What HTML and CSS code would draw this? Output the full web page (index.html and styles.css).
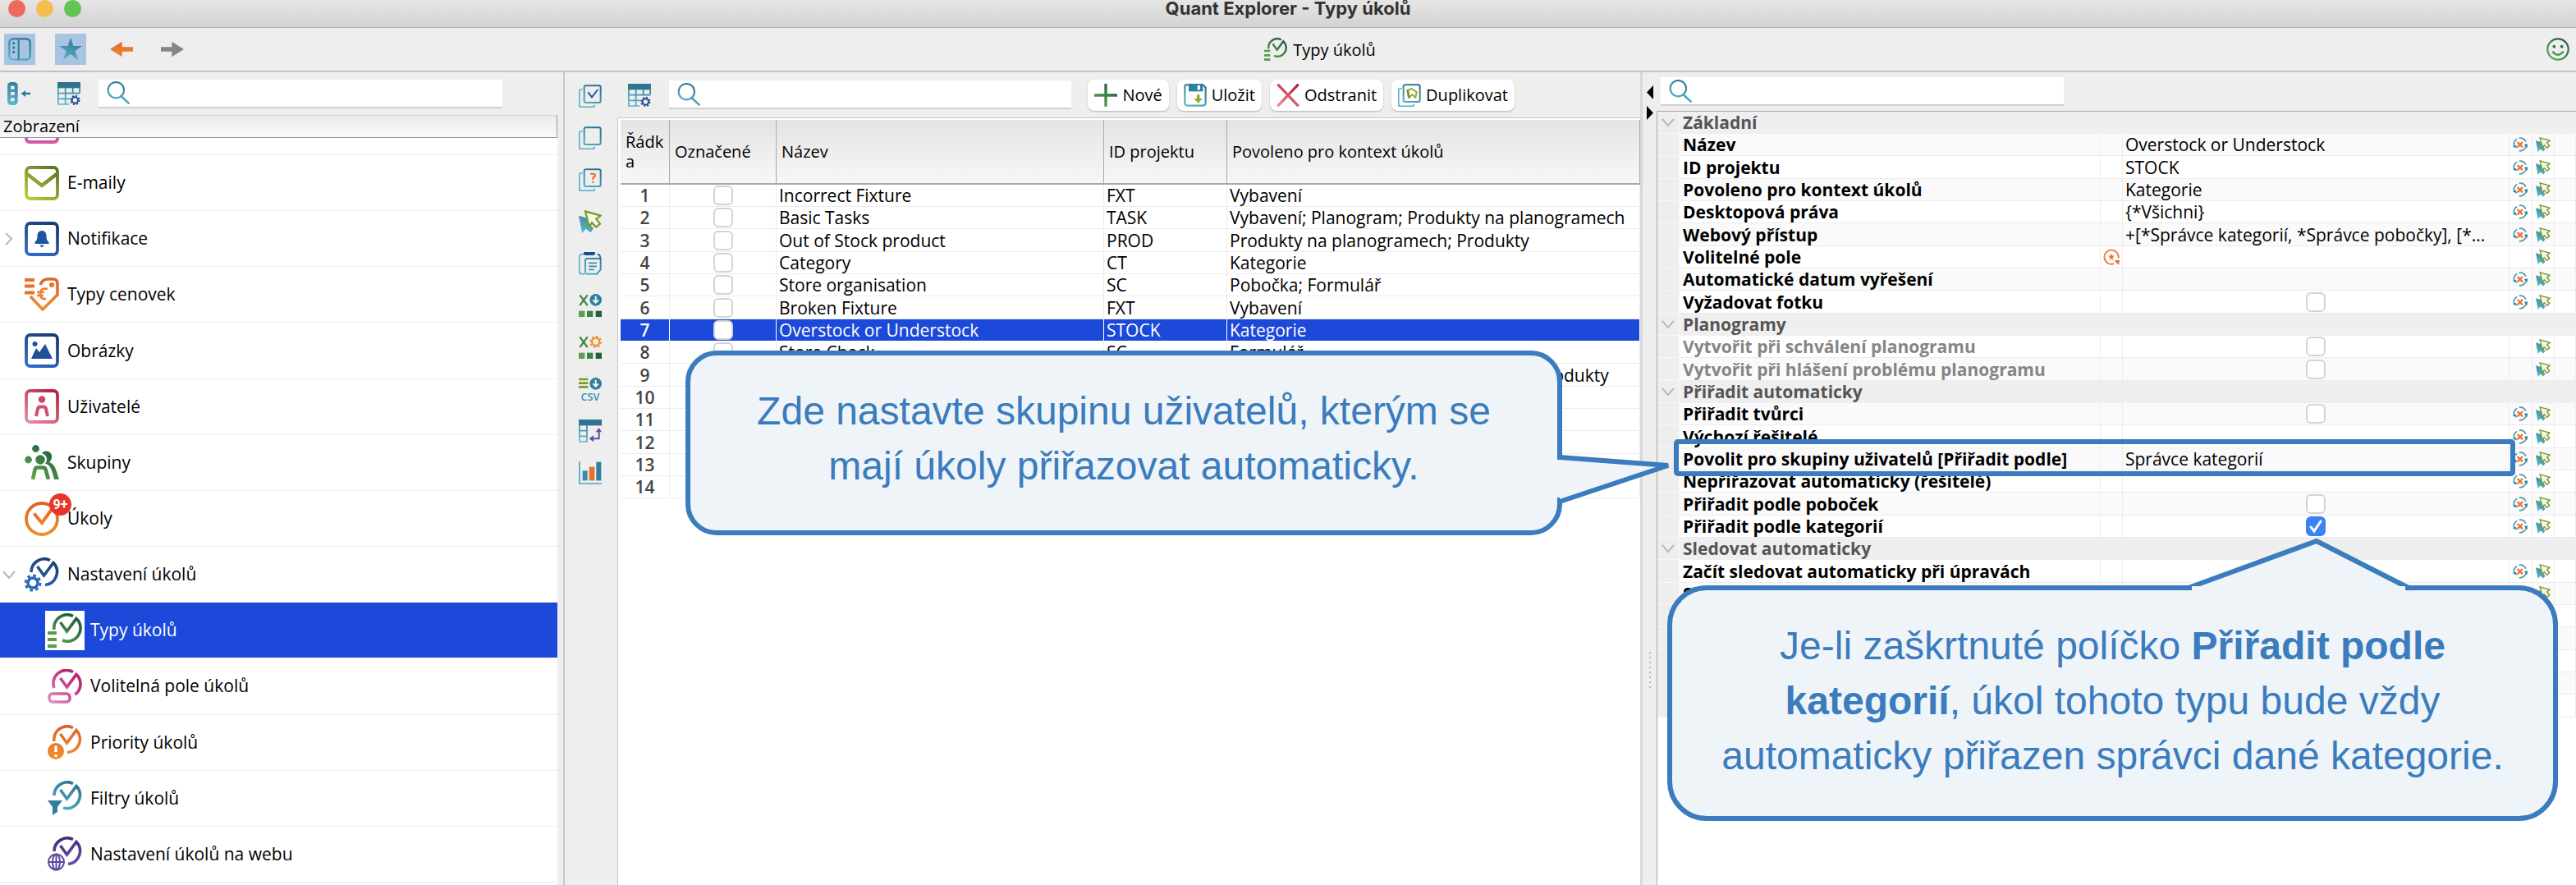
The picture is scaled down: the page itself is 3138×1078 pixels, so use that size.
FILE: index.html
```html
<!DOCTYPE html>
<html lang="cs">

<head>

  <meta charset="UTF-8">
  <meta name="viewport" content="width=device-width, initial-scale=1.0">
  <title>Quant Explorer - Typy úkolů</title>

  <link rel="stylesheet" href="styles.css">

</head>

<body>

  <!-- ! Icon sprite -->
  <svg class="sprite" aria-hidden="true">
    <defs>
      <linearGradient id="teal" gradientUnits="userSpaceOnUse" x1="30" y1="0" x2="8" y2="42">
        <stop offset="0" stop-color="#2b7392" /><stop offset="1" stop-color="#5cbacb" />
      </linearGradient>
      <linearGradient id="blue" gradientUnits="userSpaceOnUse" x1="30" y1="0" x2="10" y2="42">
        <stop offset="0" stop-color="#1c3c70" /><stop offset="1" stop-color="#2f6cc8" />
      </linearGradient>
      <linearGradient id="green" gradientUnits="userSpaceOnUse" x1="34" y1="4" x2="6" y2="40">
        <stop offset="0" stop-color="#1d5c40" /><stop offset="1" stop-color="#62aa4c" />
      </linearGradient>
      <linearGradient id="orange" gradientUnits="userSpaceOnUse" x1="21" y1="0" x2="21" y2="42">
        <stop offset="0" stop-color="#e0602c" /><stop offset="1" stop-color="#f0902e" />
      </linearGradient>
      <linearGradient id="magenta" gradientUnits="userSpaceOnUse" x1="30" y1="10" x2="4" y2="40">
        <stop offset="0" stop-color="#bd2473" /><stop offset="1" stop-color="#e08cc4" />
      </linearGradient>
      <linearGradient id="red" gradientUnits="userSpaceOnUse" x1="36" y1="0" x2="6" y2="42">
        <stop offset="0" stop-color="#b41f38" /><stop offset="1" stop-color="#ea8ba4" />
      </linearGradient>
      <linearGradient id="olive" gradientUnits="userSpaceOnUse" x1="36" y1="0" x2="6" y2="42">
        <stop offset="0" stop-color="#557326" /><stop offset="1" stop-color="#c2cb38" />
      </linearGradient>
      <linearGradient id="purple" gradientUnits="userSpaceOnUse" x1="21" y1="0" x2="21" y2="42">
        <stop offset="0" stop-color="#432a78" /><stop offset="1" stop-color="#6f5db0" />
      </linearGradient>

      <symbol id="i-sidebar" viewBox="0 0 42 42">
        <rect x="2" y="2" width="38" height="38" rx="7" fill="none" stroke="url(#teal)" stroke-width="3.5" />
        <path d="M19 2v38" stroke="#2f7c98" stroke-width="3" />
        <path d="M10 10v0M10 18v0M10 26v0" stroke="#2f7c98" stroke-width="5" stroke-linecap="round" />
      </symbol>
      <symbol id="i-star" viewBox="0 0 42 42">
        <path d="M21 0l5 15h16L29 24l6 17-14-11L7 41l6-17L0 15h16z" fill="url(#teal)" />
      </symbol>
      <symbol id="i-left" viewBox="0 0 42 42">
        <path d="M0 21L22 7v10h20v8H22v10z" fill="url(#orange)" />
      </symbol>
      <symbol id="i-right" viewBox="0 0 42 42">
        <path d="M42 21L20 7v10H0v8h20v10z" fill="#858585" />
      </symbol>
      <symbol id="i-task-types" viewBox="0 0 42 42">
        <path d="M8 20A16 16 0 0 1 31 3.500M15.500 11l8 11L35 6.500A16 16 0 0 1 18 33" fill="none" stroke="url(#green)" stroke-width="3.600" />
        <path d="M0 24h11M0 32h11M0 40h11" stroke="#5a9c4a" stroke-width="4" />
      </symbol>
      <symbol id="i-task-fields" viewBox="0 0 42 42">
        <path d="M8 23A16 16 0 0 1 31 3.500M15.500 11l8 11L35 6.500A16 16 0 0 1 33.500 31" fill="none" stroke="url(#magenta)" stroke-width="3.600" />
        <rect x="2" y="30" width="25" height="10" rx="4" fill="none" stroke="url(#magenta)" stroke-width="3.600" />
      </symbol>
      <symbol id="i-task-priority" viewBox="0 0 42 42">
        <path d="M8 20A16 16 0 0 1 31 3.500M15.500 11l8 11L35 6.500A16 16 0 0 1 24 33.500" fill="none" stroke="url(#orange)" stroke-width="3.600" />
        <circle cx="10" cy="32" r="10" fill="url(#orange)" />
        <path d="M10 25.500v7.500M10 36v3" stroke="#fff" stroke-width="3.400" />
      </symbol>
      <symbol id="i-task-filter" viewBox="0 0 42 42">
        <path d="M8 18A16 16 0 0 1 31 3.500M15.500 11l8 11L35 6.500A16 16 0 0 1 19 33" fill="none" stroke="url(#teal)" stroke-width="3.600" />
        <path d="M0 24h18l-6 8v6l-6 4v-10z" fill="#2f7f9e" />
      </symbol>
      <symbol id="i-task-web" viewBox="0 0 42 42">
        <path d="M8 18A16 16 0 0 1 31 3.500M15.500 11l8 11L35 6.500A16 16 0 0 1 25 33.500" fill="none" stroke="url(#purple)" stroke-width="3.600" />
        <g fill="none" stroke="#5d4a9c" stroke-width="2">
          <circle cx="10.500" cy="31" r="9.500" /><ellipse cx="10.500" cy="31" rx="4.500" ry="9.500" /><path d="M10.500 21v20M1 31h19" />
        </g>
      </symbol>
      <symbol id="i-task-settings" viewBox="0 0 42 42">
        <path d="M8 18A16 16 0 0 1 31 3.500M15.500 11l8 11L35 6.500A16 16 0 0 1 25 33.500" fill="none" stroke="url(#blue)" stroke-width="3.600" />
        <circle cx="10" cy="31" r="6" fill="none" stroke="#2d66bc" stroke-width="3.500" />
        <circle cx="10" cy="31" r="9" fill="none" stroke="#2d66bc" stroke-width="3" stroke-dasharray="3.600 3.460" />
      </symbol>
      <symbol id="i-tasks" viewBox="0 0 42 42">
        <circle cx="21" cy="21" r="19" fill="none" stroke="url(#orange)" stroke-width="3.800" />
        <path d="M11.500 14.500L21 26l13-18" fill="none" stroke="url(#orange)" stroke-width="4" />
      </symbol>
      <symbol id="i-mail" viewBox="0 0 42 42">
        <rect x="2" y="2" width="38" height="38" rx="5" fill="none" stroke="url(#olive)" stroke-width="3.800" />
        <path d="M3 10l18 14 18-14" fill="none" stroke="url(#olive)" stroke-width="4.500" />
      </symbol>
      <symbol id="i-notify" viewBox="0 0 42 42">
        <rect x="2" y="2" width="38" height="38" rx="5" fill="none" stroke="url(#blue)" stroke-width="3.800" />
        <path d="M21 11c-4 0-5.500 3-5.500 6.500 0 4-1 5.500-3 7.500v2h17v-2c-2-2-3-3.500-3-7.500 0-3.500-1.500-6.500-5.500-6.500zM18 28.500h6l-3 3z" fill="#2253a0" />
      </symbol>
      <symbol id="i-price" viewBox="0 0 42 42">
        <path d="M0 3h12M0 10.500h12M0 18.500h12" stroke="#e8702c" stroke-width="4" />
        <path d="M19 9q3-7 9-7h7q5 0 5 6v13L22 39 7 23" fill="none" stroke="url(#orange)" stroke-width="3.600" />
        <circle cx="33" cy="9" r="3" fill="#e8702c" />
        <path d="M28 14q-9-2-9 6 0 7 7 6M15 18h9M15 22h8" fill="none" stroke="#ee8030" stroke-width="2.600" />
      </symbol>
      <symbol id="i-image" viewBox="0 0 42 42">
        <rect x="2" y="2" width="38" height="38" rx="5" fill="none" stroke="url(#blue)" stroke-width="3.800" />
        <path d="M8 31l6-13 4 5 7-10 9 18z" fill="#21509a" /><circle cx="12.500" cy="13" r="3" fill="#21509a" />
      </symbol>
      <symbol id="i-user" viewBox="0 0 42 42">
        <rect x="2" y="2" width="38" height="38" rx="5" fill="none" stroke="url(#red)" stroke-width="3.800" />
        <circle cx="21" cy="12.500" r="4.200" fill="#cc4560" />
        <path d="M14 33l2-9q.5-2.500 3-2.500h4q2.500 0 3 2.500l2 9" fill="none" stroke="#d0506c" stroke-width="4" />
      </symbol>
      <symbol id="i-groups" viewBox="0 0 42 42">
        <g fill="url(#green)">
          <circle cx="13.500" cy="4.500" r="4.400" /><circle cx="4.500" cy="18" r="4.400" />
          <path d="M21 10c4-5 13-2 12 5 0 3-2 5-3 6 6 2 8 7 12 21h-6c-3-13-5-18-11-19 4-5 2-11-4-13z" />
          <circle cx="19" cy="18" r="5.800" />
        </g>
        <path d="M10 42l2.500-12q.5-2.500 3-2.500h7q2.500 0 3 2.500L29 42" fill="none" stroke="url(#green)" stroke-width="4.600" />
      </symbol>
      <symbol id="i-search" viewBox="0 0 42 42">
        <circle cx="17" cy="16" r="14.500" fill="none" stroke="url(#teal)" stroke-width="3.200" />
        <path d="M26 27l14 13" stroke="#4aa5bb" stroke-width="3.800" stroke-linecap="round" />
      </symbol>
      <symbol id="i-collapse" viewBox="0 0 42 42">
        <rect x="0" y="0" width="19" height="42" rx="7" fill="url(#teal)" />
        <path d="M6 7h7v6H6zM6 18h7v6H6zM6 29h7v6H6z" fill="#eee" />
        <path d="M25 21l8-6v4h9v4h-9v4z" fill="#2b7c98" />
      </symbol>
      <symbol id="i-table" viewBox="0 0 42 42">
        <path d="M0 0h42v11H0z" fill="#2f7592" />
        <path d="M1.200 10v30.500H21M14.500 10v31M28 10v9M40.800 10v9M0 20.500h41M0 30.500h22" fill="none" stroke="url(#teal)" stroke-width="2.600" />
        <circle cx="32" cy="33" r="5.500" fill="none" stroke="#1f4a90" stroke-width="3" />
        <circle cx="32" cy="33" r="8" fill="none" stroke="#1f4a90" stroke-width="2.500" stroke-dasharray="3.140 3.140" />
      </symbol>
      <symbol id="i-pages" viewBox="0 0 42 42">
        <rect x="10" y="2" width="30" height="31" rx="3" fill="none" stroke="url(#teal)" stroke-width="3" />
        <path d="M7 9H4q-3 0-3 3v26q0 3 3 3h22q3 0 3-4" fill="none" stroke="#55b0c6" stroke-width="2.600" />
      </symbol>
      <symbol id="i-pages-check" viewBox="0 0 42 42">
        <use href="#i-pages" /><path d="M17 14l7 9L35 9" fill="none" stroke="#2556ae" stroke-width="3" />
      </symbol>
      <symbol id="i-pages-ask" viewBox="0 0 42 42">
        <use href="#i-pages" /><path d="M21 10h7q2 0 2 3t-4 4v4M26 23.500v3.500" fill="none" stroke="#ea6c2c" stroke-width="3" />
      </symbol>
      <symbol id="i-cursor" viewBox="0 0 42 42">
        <path d="M0 10l6 32 7-8 9 7 5-8-6-6 6-9z" fill="url(#teal)" />
        <path d="M12 2l28 8-8 6 7 9-7 6-8-8-5 7z" fill="#f2f7ea" stroke="#7b9c2c" stroke-width="3.400" />
      </symbol>
      <symbol id="i-paste" viewBox="0 0 42 42">
        <path d="M10 4H6Q1 4 1 9v26q0 5 5 5h5" fill="none" stroke="#5ab4c8" stroke-width="2.600" />
        <path d="M9 0h21v2q0 4-4 4H13q-4 0-4-4z" fill="#20498e" />
        <path d="M12 16q0-4 4-4h24l-1-4q-1-4-5-4M40 12v20l-7 8H16q-4 0-4-4V16" fill="none" stroke="url(#teal)" stroke-width="3" />
        <path d="M18 20h15M18 26h15M18 32h10" stroke="#3b90aa" stroke-width="2.600" />
      </symbol>
      <symbol id="i-xls" viewBox="0 0 42 42">
        <path d="M2 2l14 19M16 2L2 21" stroke="#3f8a48" stroke-width="3.400" />
        <path d="M0 31h11v11H0z" fill="#58a04c" /><path d="M15 31h11v11H15z" fill="#3a8248" /><path d="M31 31h11v11H31z" fill="#20603e" />
      </symbol>
      <symbol id="i-xls-down" viewBox="0 0 42 42">
        <use href="#i-xls" /><circle cx="31" cy="11" r="11" fill="#2f7f9e" />
        <path d="M31 4v12M26 11l5 5 5-5" fill="none" stroke="#fff" stroke-width="2.800" />
      </symbol>
      <symbol id="i-xls-gear" viewBox="0 0 42 42">
        <use href="#i-xls" /><circle cx="31" cy="11" r="7" fill="none" stroke="#f09030" stroke-width="3.400" />
        <circle cx="31" cy="11" r="10" fill="none" stroke="#f09030" stroke-width="2.600" stroke-dasharray="4 3.850" />
      </symbol>
      <symbol id="i-csv" viewBox="0 0 42 42">
        <path d="M0 3h17M0 10h17M0 17h17" stroke="#7d9a2a" stroke-width="4" />
        <circle cx="31" cy="11" r="11" fill="#2f7f9e" />
        <path d="M31 4v12M26 11l5 5 5-5" fill="none" stroke="#fff" stroke-width="2.800" />
        <text x="21" y="42" text-anchor="middle" class="icon-text">CSV</text>
      </symbol>
      <symbol id="i-pivot" viewBox="0 0 42 42">
        <path d="M0 0h42v11H0z" fill="#2f7592" />
        <path d="M1.200 10v30.500H15V10M0 20.500h15M0 30.500h15" fill="none" stroke="url(#teal)" stroke-width="2.600" />
        <path d="M37 20v15H24" fill="none" stroke="#6a4aa2" stroke-width="3" /><path d="M31 23l6-8 5 8zM27 29v12l-8-6z" fill="#6a4aa2" />
      </symbol>
      <symbol id="i-chart" viewBox="0 0 42 42">
        <path d="M1.200 0v40.500H42" fill="none" stroke="#4ea9be" stroke-width="2.600" />
        <path d="M7 17h9v18H7z" fill="#3b8ca8" /><path d="M19 10h10v25H19z" fill="#e8702c" /><path d="M32 1h9v34h-9z" fill="#2f7f9e" />
      </symbol>
      <symbol id="i-plus" viewBox="0 0 42 42">
        <path d="M21 0v42M0 21h42" stroke="url(#green)" stroke-width="5" />
      </symbol>
      <symbol id="i-save" viewBox="0 0 42 42">
        <path d="M5 2h30l5 5v28q0 5-5 5H7q-5 0-5-5V5q0-3 3-3z" fill="none" stroke="url(#teal)" stroke-width="3.200" />
        <path d="M9 0h26v14H9z" fill="#2f7f9e" /><path d="M25 3h5v8h-5z" fill="#fff" />
        <path d="M24 20h5v7h5l-7.500 9-7.500-9h5z" fill="#94a82c" />
      </symbol>
      <symbol id="i-delete" viewBox="0 0 42 42">
        <path d="M2 1l38 40M40 1L2 41" stroke="url(#red)" stroke-width="5" />
      </symbol>
      <symbol id="i-duplicate" viewBox="0 0 42 42">
        <use href="#i-pages" /><path d="M17 12l3 13 6-5 6 5 2-10-9-6z" fill="#fff" stroke="#94a82c" stroke-width="3" /><path d="M16 11l4 2 2 14-4-2z" fill="#6f8e28" />
      </symbol>
      <symbol id="i-smile" viewBox="0 0 42 42">
        <circle cx="21" cy="21" r="19" fill="none" stroke="url(#green)" stroke-width="3.200" />
        <circle cx="14" cy="16" r="2.800" fill="#2e7444" /><circle cx="28" cy="16" r="2.800" fill="#2e7444" />
        <path d="M11 25q10 12 20 0" fill="none" stroke="#4c9448" stroke-width="3.400" />
      </symbol>
      <symbol id="i-reset" viewBox="0 0 42 42">
        <path d="M4 26A18 18 0 0 1 12 6M18 3A18 18 0 0 1 37 13M38 26A18 18 0 0 1 18 39" fill="none" stroke="#4a9bb4" stroke-width="4" />
        <path d="M13 14l15 15M28 14L13 29" stroke="#ee7430" stroke-width="5.500" /><path d="M0 26l9-3 3 9zM32 21l10-2-1 12z" fill="#2f7f9e" />
      </symbol>
      <symbol id="i-renew" viewBox="0 0 42 42">
        <path d="M28 38A18 18 0 1 1 39 24" fill="none" stroke="#ee7d33" stroke-width="4" />
        <path d="M28 30l14-1-2 13zM21 12l2.500 6h6l-5 4 2 7-5.500-4-5.500 4 2-7-5-4h6z" fill="#e8702c" />
      </symbol>
      <symbol id="i-down" viewBox="0 0 16 10">
        <path d="M1 1l7 8 7-8" fill="none" stroke="#b8b8b8" stroke-width="2" />
      </symbol>
      <symbol id="i-next" viewBox="0 0 10 16">
        <path d="M1 1l7 7-7 7" fill="none" stroke="#b8b8b8" stroke-width="2" />
      </symbol>
    </defs>
  </svg>

  <div class="window">

    <header class="titlebar">
      <div class="lights"><span class="light close"></span><span class="light minimize"></span><span class="light zoom"></span></div>
      <h1>Quant Explorer - Typy úkolů</h1>
    </header>

    <div class="toolbar">
      <button class="tool active" aria-label="Postranní panel"><svg><use href="#i-sidebar" /></svg></button>
      <button class="tool active" aria-label="Oblíbené"><svg><use href="#i-star" /></svg></button>
      <button class="tool" aria-label="Zpět"><svg><use href="#i-left" /></svg></button>
      <button class="tool" aria-label="Vpřed"><svg><use href="#i-right" /></svg></button>
      <h2><svg><use href="#i-task-types" /></svg>Typy úkolů</h2>
      <button class="tool feedback" aria-label="Zpětná vazba"><svg><use href="#i-smile" /></svg></button>
    </div>

    <div class="panes">

      <!-- ! Left navigation -->
      <nav class="sidebar">
        <div class="searchbar">
          <button class="mini" aria-label="Sbalit"><svg><use href="#i-collapse" /></svg></button>
          <button class="mini" aria-label="Nastavení tabulky"><svg><use href="#i-table" /></svg></button>
          <label class="search"><svg><use href="#i-search" /></svg><input type="text" aria-label="Hledat zobrazení"></label>
        </div>
        <div class="tree-head">Zobrazení</div>
        <ul class="tree">
          <li class="cut-top"><span class="stub"></span></li>
          <li><a href="#"><span class="twisty"></span><svg><use href="#i-mail" /></svg>E-maily</a></li>
          <li><a href="#"><span class="twisty"><svg class="next"><use href="#i-next" /></svg></span><svg><use href="#i-notify" /></svg>Notifikace</a></li>
          <li><a href="#"><span class="twisty"></span><svg><use href="#i-price" /></svg>Typy cenovek</a></li>
          <li><a href="#"><span class="twisty"></span><svg><use href="#i-image" /></svg>Obrázky</a></li>
          <li><a href="#"><span class="twisty"></span><svg><use href="#i-user" /></svg>Uživatelé</a></li>
          <li><a href="#"><span class="twisty"></span><svg><use href="#i-groups" /></svg>Skupiny</a></li>
          <li><a href="#"><span class="twisty"></span><svg><use href="#i-tasks" /></svg>Úkoly<span class="badge">9+</span></a></li>
          <li><a href="#"><span class="twisty"><svg class="down"><use href="#i-down" /></svg></span><svg><use href="#i-task-settings" /></svg>Nastavení úkolů</a></li>
          <li class="child selected"><a href="#"><svg><use href="#i-task-types" /></svg>Typy úkolů</a></li>
          <li class="child"><a href="#"><svg><use href="#i-task-fields" /></svg>Volitelná pole úkolů</a></li>
          <li class="child"><a href="#"><svg><use href="#i-task-priority" /></svg>Priority úkolů</a></li>
          <li class="child"><a href="#"><svg><use href="#i-task-filter" /></svg>Filtry úkolů</a></li>
          <li class="child"><a href="#"><svg><use href="#i-task-web" /></svg>Nastavení úkolů na webu</a></li>
          <li class="cut-bottom"></li>
        </ul>
      </nav>

      <!-- ! Task types list -->
      <main class="content">
        <div class="strip">
          <button class="mini" aria-label="Označit vše"><svg><use href="#i-pages-check" /></svg></button>
          <button class="mini" aria-label="Zrušit označení"><svg><use href="#i-pages" /></svg></button>
          <button class="mini" aria-label="Označit podle podmínky"><svg><use href="#i-pages-ask" /></svg></button>
          <button class="mini" aria-label="Vybrat"><svg><use href="#i-cursor" /></svg></button>
          <button class="mini" aria-label="Vložit"><svg><use href="#i-paste" /></svg></button>
          <button class="mini" aria-label="Export do Excelu"><svg><use href="#i-xls-down" /></svg></button>
          <button class="mini" aria-label="Nastavení exportu"><svg><use href="#i-xls-gear" /></svg></button>
          <button class="mini" aria-label="Export do CSV"><svg><use href="#i-csv" /></svg></button>
          <button class="mini" aria-label="Kontingenční tabulka"><svg><use href="#i-pivot" /></svg></button>
          <button class="mini" aria-label="Graf"><svg><use href="#i-chart" /></svg></button>
        </div>
        <div class="list">
          <div class="actions">
            <button class="mini" aria-label="Nastavení tabulky"><svg><use href="#i-table" /></svg></button>
            <label class="search"><svg><use href="#i-search" /></svg><input type="text" aria-label="Hledat typ úkolu"></label>
            <div class="buttons">
              <button class="action"><svg><use href="#i-plus" /></svg>Nové</button>
              <button class="action"><svg><use href="#i-save" /></svg>Uložit</button>
              <button class="action"><svg><use href="#i-delete" /></svg>Odstranit</button>
              <button class="action"><svg><use href="#i-duplicate" /></svg>Duplikovat</button>
            </div>
          </div>
          <div class="list-body">
            <table class="rows">
              <colgroup><col class="c-num"><col class="c-mark"><col class="c-name"><col class="c-id"><col></colgroup>
              <thead>
                <tr><th>Řádka</th><th>Označené</th><th>Název</th><th>ID projektu</th><th>Povoleno pro kontext úkolů</th></tr>
              </thead>
              <tbody>
                <tr><td>1</td><td><input type="checkbox" aria-label="Označit 1"></td><td>Incorrect Fixture</td><td>FXT</td><td>Vybavení</td></tr>
                <tr><td>2</td><td><input type="checkbox" aria-label="Označit 2"></td><td>Basic Tasks</td><td>TASK</td><td>Vybavení; Planogram; Produkty na planogramech</td></tr>
                <tr><td>3</td><td><input type="checkbox" aria-label="Označit 3"></td><td>Out of Stock product</td><td>PROD</td><td>Produkty na planogramech; Produkty</td></tr>
                <tr><td>4</td><td><input type="checkbox" aria-label="Označit 4"></td><td>Category</td><td>CT</td><td>Kategorie</td></tr>
                <tr><td>5</td><td><input type="checkbox" aria-label="Označit 5"></td><td>Store organisation</td><td>SC</td><td>Pobočka; Formulář</td></tr>
                <tr><td>6</td><td><input type="checkbox" aria-label="Označit 6"></td><td>Broken Fixture</td><td>FXT</td><td>Vybavení</td></tr>
                <tr class="selected"><td>7</td><td><input type="checkbox" aria-label="Označit 7"></td><td>Overstock or Understock</td><td>STOCK</td><td>Kategorie</td></tr>
                <tr><td>8</td><td><input type="checkbox" aria-label="Označit 8"></td><td>Store Check</td><td>SC</td><td>Formulář</td></tr>
                <tr><td>9</td><td><input type="checkbox" aria-label="Označit 9"></td><td></td><td></td><td>Vybavení; Planogram; Kategorie; Tým; Produkty</td></tr>
                <tr><td>10</td><td><input type="checkbox" aria-label="Označit 10"></td><td></td><td></td><td></td></tr>
                <tr><td>11</td><td><input type="checkbox" aria-label="Označit 11"></td><td></td><td></td><td></td></tr>
                <tr><td>12</td><td><input type="checkbox" aria-label="Označit 12"></td><td></td><td></td><td></td></tr>
                <tr><td>13</td><td><input type="checkbox" aria-label="Označit 13"></td><td></td><td></td><td></td></tr>
                <tr><td>14</td><td><input type="checkbox" aria-label="Označit 14"></td><td></td><td></td><td></td></tr>
              </tbody>
            </table>
          </div>
        </div>
      </main>

      <!-- ! Properties -->
      <aside class="details">
        <div class="splitter">
          <svg class="arrows" viewBox="0 0 8 42"><path d="M8 0v17L0 8.500zM0 25v17l8-8.500z" /></svg>
          <span class="grip"></span>
        </div>
        <div class="props">
          <div class="props-search">
            <label class="search"><svg><use href="#i-search" /></svg><input type="text" aria-label="Hledat vlastnost"></label>
          </div>
          <div class="props-body">
            <table class="rows props-table">
              <colgroup><col class="p-gutter"><col class="p-label"><col class="p-flag"><col><col class="p-reset"><col class="p-pick"><col class="p-end"></colgroup>
              <tbody>
                <tr class="group"><td><svg class="down"><use href="#i-down" /></svg></td><th colspan="6">Základní</th></tr>
                <tr><td></td><th>Název</th><td></td><td>Overstock or Understock</td><td><svg><use href="#i-reset" /></svg></td><td><svg><use href="#i-cursor" /></svg></td><td></td></tr>
                <tr><td></td><th>ID projektu</th><td></td><td>STOCK</td><td><svg><use href="#i-reset" /></svg></td><td><svg><use href="#i-cursor" /></svg></td><td></td></tr>
                <tr><td></td><th>Povoleno pro kontext úkolů</th><td></td><td>Kategorie</td><td><svg><use href="#i-reset" /></svg></td><td><svg><use href="#i-cursor" /></svg></td><td></td></tr>
                <tr><td></td><th>Desktopová práva</th><td></td><td>{*Všichni}</td><td><svg><use href="#i-reset" /></svg></td><td><svg><use href="#i-cursor" /></svg></td><td></td></tr>
                <tr><td></td><th>Webový přístup</th><td></td><td>+[*Správce kategorií, *Správce pobočky], [*...</td><td><svg><use href="#i-reset" /></svg></td><td><svg><use href="#i-cursor" /></svg></td><td></td></tr>
                <tr><td></td><th>Volitelné pole</th><td><svg class="renew"><use href="#i-renew" /></svg></td><td></td><td></td><td><svg><use href="#i-cursor" /></svg></td><td></td></tr>
                <tr><td></td><th>Automatické datum vyřešení</th><td></td><td></td><td><svg><use href="#i-reset" /></svg></td><td><svg><use href="#i-cursor" /></svg></td><td></td></tr>
                <tr><td></td><th><label for="photo">Vyžadovat fotku</label></th><td></td><td><input type="checkbox" id="photo"></td><td><svg><use href="#i-reset" /></svg></td><td><svg><use href="#i-cursor" /></svg></td><td></td></tr>
                <tr class="group"><td><svg class="down"><use href="#i-down" /></svg></td><th colspan="6">Planogramy</th></tr>
                <tr class="muted"><td></td><th><label for="on-approve">Vytvořit při schválení planogramu</label></th><td></td><td><input type="checkbox" id="on-approve"></td><td></td><td><svg><use href="#i-cursor" /></svg></td><td></td></tr>
                <tr class="muted"><td></td><th><label for="on-problem">Vytvořit při hlášení problému planogramu</label></th><td></td><td><input type="checkbox" id="on-problem"></td><td></td><td><svg><use href="#i-cursor" /></svg></td><td></td></tr>
                <tr class="group"><td><svg class="down"><use href="#i-down" /></svg></td><th colspan="6">Přiřadit automaticky</th></tr>
                <tr><td></td><th><label for="to-author">Přiřadit tvůrci</label></th><td></td><td><input type="checkbox" id="to-author"></td><td><svg><use href="#i-reset" /></svg></td><td><svg><use href="#i-cursor" /></svg></td><td></td></tr>
                <tr><td></td><th>Výchozí řešitelé</th><td></td><td></td><td><svg><use href="#i-reset" /></svg></td><td><svg><use href="#i-cursor" /></svg></td><td></td></tr>
                <tr class="marked"><td></td><th>Povolit pro skupiny uživatelů [Přiřadit podle]</th><td></td><td>Správce kategorií</td><td><svg><use href="#i-reset" /></svg></td><td><svg><use href="#i-cursor" /></svg></td><td></td></tr>
                <tr><td></td><th>Nepřiřazovat automaticky (řešitelé)</th><td></td><td></td><td><svg><use href="#i-reset" /></svg></td><td><svg><use href="#i-cursor" /></svg></td><td></td></tr>
                <tr><td></td><th><label for="by-store">Přiřadit podle poboček</label></th><td></td><td><input type="checkbox" id="by-store"></td><td><svg><use href="#i-reset" /></svg></td><td><svg><use href="#i-cursor" /></svg></td><td></td></tr>
                <tr><td></td><th><label for="by-category">Přiřadit podle kategorií</label></th><td></td><td><input type="checkbox" id="by-category" checked></td><td><svg><use href="#i-reset" /></svg></td><td><svg><use href="#i-cursor" /></svg></td><td></td></tr>
                <tr class="group"><td><svg class="down"><use href="#i-down" /></svg></td><th colspan="6">Sledovat automaticky</th></tr>
                <tr><td></td><th>Začít sledovat automaticky při úpravách</th><td></td><td></td><td><svg><use href="#i-reset" /></svg></td><td><svg><use href="#i-cursor" /></svg></td><td></td></tr>
                <tr><td></td><th>Sledovatelé</th><td></td><td></td><td></td><td><svg><use href="#i-cursor" /></svg></td><td></td></tr>
                <tr><td></td><th></th><td></td><td></td><td></td><td></td><td></td></tr>
                <tr><td></td><th></th><td></td><td></td><td></td><td></td><td></td></tr>
                <tr><td></td><th></th><td></td><td></td><td></td><td></td><td></td></tr>
                <tr><td></td><th></th><td></td><td></td><td></td><td></td><td></td></tr>
                <tr><td></td><th></th><td></td><td></td><td></td><td></td><td></td></tr>
              </tbody>
            </table>
            <!-- frame over the highlighted row, callouts point at it -->
            <div class="frame"></div>
            <div class="callout callout-check">
              <svg class="tail tail-up" viewBox="0 0 272 66"><path d="M2 63L158 6l112 57" /><path class="joint" d="M6 61h260v5H6z" /></svg>
              <p>Je-li zaškrtnuté políčko <strong>Přiřadit podle kategorií</strong>, úkol tohoto typu bude vždy automaticky přiřazen správci dané kategorie.</p>
            </div>
            <div class="callout callout-group">
              <svg class="tail tail-right" viewBox="0 0 142 62"><path d="M3 4l132 10L3 58" /><path class="joint" d="M0 7h6v46H0z" /></svg>
              <p>Zde nastavte skupinu uživatelů, kterým se mají úkoly přiřazovat automaticky.</p>
            </div>
          </div>
        </div>
      </aside>

    </div>
  </div>

</body>

</html>
```
FILE: styles.css
```css
:root {
  --font: "Open Sans", "Noto Sans", sans-serif;
  --chrome: #eeeeee;
  --line: #ececec;
  --edge: #c4c4c4;
  --selected: #1c49da;
  --callout: #3a7cbd;
  --callout-fill: #eff4f8;
}

* {
  box-sizing: border-box;
}

html,
body {
  height: 100%;
  margin: 0;
  overflow: hidden;
  background-color: var(--chrome);
  color: #000;
  font-family: var(--font);
  font-size: 21px;
  line-height: 27px;
}

button {
  margin: 0;
  padding: 0;
  border: 0;
  background: none;
  font: inherit;
  color: inherit;
  cursor: pointer;
}

svg {
  display: block;
  flex: none;
}

.sprite {
  position: absolute;
  width: 0;
  height: 0;
}

.icon-text {
  font: 600 19px var(--font);
  fill: #3a90aa;
}

.window {
  display: flex;
  flex-direction: column;
  height: 100vh;
}

/* Title bar */
.titlebar {
  display: grid;
  grid-template-columns: 1fr auto 1fr;
  height: 34px;
  border-bottom: 1px solid #b0b0b0;
  background: linear-gradient(#e6e6e6, #d2d2d2);
}

.titlebar h1 {
  margin: 0;
  font-family: Inter, sans-serif;
  font-size: 22px;
  font-weight: 700;
  line-height: 20px;
  color: #333;
}

.lights {
  display: flex;
  gap: 13px;
  padding-left: 10px;
}

.light {
  width: 21px;
  height: 21px;
  border-radius: 50%;
}

.close {
  background: #ed6a5e;
}

.minimize {
  background: #f5bf4f;
}

.zoom {
  background: #61c454;
}

/* Main toolbar */
.toolbar {
  display: flex;
  align-items: center;
  gap: 24px;
  height: 54px;
  padding: 0 3px 0 5px;
  border-bottom: 2px solid #c2c2c2;
}

.toolbar h2 {
  display: flex;
  flex: 1;
  align-items: center;
  justify-content: center;
  gap: 7px;
  margin: 0;
  padding-right: 110px;
  font-size: 20px;
  font-weight: 400;
}

.toolbar svg,
.mini svg,
.action svg,
.search svg {
  width: 28px;
  height: 28px;
}

.tool {
  display: grid;
  place-items: center;
  width: 38px;
  height: 38px;
}

.tool.active {
  background: #a9c3e2;
}

.panes {
  display: grid;
  flex: 1;
  grid-template-columns: minmax(0, 688fr) minmax(0, 1313fr) minmax(0, 1137fr);
  min-height: 0;
}

/* Search boxes */
.search {
  display: flex;
  align-items: center;
  height: 35px;
  padding-left: 10px;
  border-bottom: 2px solid #d0d0d0;
  background: #fff;
}

.search input {
  flex: 1;
  min-width: 0;
  height: 30px;
  border: 0;
  outline: 0;
  background: none;
  font: inherit;
}

/* Left navigation */
.sidebar {
  display: flex;
  flex-direction: column;
  min-height: 0;
  padding-right: 7px;
  border-right: 2px solid #c6c6c6;
}

.searchbar {
  display: flex;
  align-items: center;
  height: 52px;
  padding-left: 9px;
}

.searchbar .mini {
  margin-right: 33px;
}

.searchbar .mini + .mini {
  margin-right: 22px;
}

.searchbar .search {
  flex: 1;
  margin-right: 67px;
}

.tree-head {
  height: 28px;
  padding-left: 4px;
  border: 1px solid #999;
  border-left: 0;
  border-top-color: #d8d8d8;
  background: linear-gradient(#eaeaea, #fafafa);
  font-size: 20px;
  line-height: 25px;
}

.tree {
  display: flex;
  flex: 1;
  flex-direction: column;
  min-height: 0;
  margin: 0;
  padding: 0;
  background: #fff;
  list-style: none;
}

.tree li {
  flex: 1;
  border-bottom: 1px solid #ededed;
}

.tree .cut-top {
  flex: 0 0 21px;
  padding-left: 30px;
}

.tree .cut-bottom {
  flex: 0 0 3px;
  border: 0;
}

/* bottom edge of the row scrolled out of view */
.stub {
  display: block;
  width: 42px;
  height: 7px;
  border: 4px solid #d05aa4;
  border-top: 0;
  border-radius: 0 0 6px 6px;
}

.tree a {
  position: relative;
  display: flex;
  align-items: center;
  height: 100%;
  color: inherit;
  text-decoration: none;
}

.tree a > svg {
  width: 42px;
  height: 42px;
  margin-right: 10px;
}

.tree .child a {
  padding-left: 58px;
}

.twisty {
  display: flex;
  justify-content: center;
  width: 22px;
  margin-right: 8px;
}

.twisty .next {
  width: 10px;
  height: 16px;
}

.down {
  width: 16px;
  height: 10px;
}

.tree .selected {
  border-color: #fff;
  background: var(--selected);
  color: #fff;
}

.tree .selected svg {
  background: #fff;
  box-shadow: 0 0 0 3px #fff;
}

.badge {
  position: absolute;
  top: 3px;
  left: 60px;
  width: 27px;
  height: 27px;
  border-radius: 50%;
  background: #e8352b;
  color: #fff;
  font: 700 16px/27px Roboto, sans-serif;
  text-align: center;
}

/* Task types list */
.content {
  display: flex;
  min-width: 0;
  border-right: 3px solid #d8d8d8;
}

.strip {
  display: flex;
  flex: none;
  flex-direction: column;
  align-items: center;
  gap: 23px;
  width: 64px;
  padding: 15px 3px 0 0;
}

.list {
  display: flex;
  flex: 1;
  flex-direction: column;
  min-width: 0;
}

.actions {
  display: flex;
  align-items: center;
  height: 55px;
  padding: 0 153px 0 13px;
}

.actions .search {
  flex: 1;
  margin: 0 20px 0 22px;
}

.buttons {
  display: flex;
  gap: 10px;
}

.action {
  display: flex;
  align-items: center;
  gap: 6px;
  height: 38px;
  padding: 0 8px;
  border-radius: 8px;
  background: #fff;
  box-shadow: 0 1px 2px #00000040;
  font-size: 20px;
}

.list-body {
  flex: 1;
  min-height: 0;
  padding: 2px 0 0 3px;
  border: 1px solid var(--edge);
  border-width: 1px 0 0 1px;
  background: #fff;
}

.rows {
  width: 100%;
  border-collapse: separate;
  border-spacing: 0;
  table-layout: fixed;
}

.rows td,
.rows tbody th {
  height: 27px;
  padding: 0 3px;
  overflow: hidden;
  border: 0 solid var(--line);
  border-width: 0 1px 1px 0;
  font-weight: 400;
  line-height: 26px;
  text-align: left;
  white-space: nowrap;
}

.rows tbody tr:nth-child(3n) > * {
  height: 28px;
}

.rows thead th {
  height: 79px;
  padding: 0 0 0 6px;
  border: 0 solid #aaa;
  border-width: 0 1px 2px 0;
  background: linear-gradient(#e4e4e4, #f7f7f7);
  font-size: 20px;
  font-weight: 400;
  line-height: 24px;
  text-align: left;
  overflow-wrap: anywhere;
}

.list-body .rows td:first-child {
  color: #444;
  font-weight: 600;
  text-align: center;
}

.c-num {
  width: 60px;
}

.c-mark {
  width: 130px;
}

.c-name {
  width: 399px;
}

.c-id {
  width: 150px;
}

.list-body .rows .selected td {
  border-color: #fff;
  background: var(--selected);
  color: #fff;
}

input[type="checkbox"] {
  display: block;
  width: 24px;
  height: 24px;
  margin: 1px auto;
  appearance: none;
  border: 2px solid #d4d4d4;
  border-radius: 6px;
  background: #fff;
}

input[type="checkbox"]:checked {
  border-color: #3b82f7;
  background: #3b82f7 url("data:image/svg+xml,%3Csvg xmlns='http://www.w3.org/2000/svg' viewBox='0 0 20 20'%3E%3Cpath d='M4 11l4 5 8-12' fill='none' stroke='white' stroke-width='3' stroke-linecap='round'/%3E%3C/svg%3E");
}

/* Properties */
.details {
  display: flex;
  min-width: 0;
}

.splitter {
  display: flex;
  flex: none;
  flex-direction: column;
  align-items: center;
  width: 17px;
  padding: 16px 0 240px;
}

.arrows {
  width: 8px;
  height: 42px;
}

.grip {
  width: 2px;
  height: 44px;
  margin-top: auto;
  background: repeating-linear-gradient(#b8b8b8 0 2px, transparent 2px 6px);
}

.props {
  display: flex;
  flex: 1;
  flex-direction: column;
  min-width: 0;
}

.props-search {
  display: flex;
  align-items: center;
  height: 47px;
}

.props-search .search {
  width: 491px;
  margin-left: 5px;
}

.props-body {
  position: relative;
  flex: 1;
  min-height: 0;
  border: 1px solid #a8a8a8;
  border-width: 1px 0 0 1px;
  background: #fff;
}

.props-table tr:nth-child(even) {
  background: #fafafa;
}

.rows.props-table th {
  padding-left: 4px;
  font-weight: 700;
}

.rows.props-table td:first-child {
  border-color: #f8f8f8;
  background: var(--chrome);
}

.props-table td svg {
  width: 18px;
  height: 20px;
  margin: 0 auto;
}

.props-table td .renew {
  width: 20px;
  height: 22px;
}

.props-table td .down {
  width: 16px;
  height: 10px;
}

.rows.props-table .group > * {
  border-color: #efefef;
  background: #efefef;
  color: #555;
}

.muted {
  color: #858585;
}

.p-gutter,
.p-flag,
.p-pick {
  width: 27px;
}

.p-label {
  width: 513px;
}

.p-reset {
  width: 28px;
}

.p-end {
  width: 26px;
}

/* Callouts */
.frame {
  position: absolute;
  top: 399px;
  left: 20px;
  right: 74px;
  height: 45px;
  border: 6px solid var(--callout);
  border-radius: 5px;
}

.callout {
  position: absolute;
  border: 6px solid var(--callout);
  background: var(--callout-fill);
  color: var(--callout);
  font-family: "Liberation Sans", sans-serif;
  font-size: 48px;
  line-height: 67px;
  text-align: center;
}

.callout p {
  margin: 0;
}

.callout-check {
  top: 577px;
  left: 12px;
  right: 22px;
  height: 287px;
  padding: 34px 30px;
  border-radius: 48px;
}

.callout-group {
  top: 291px;
  right: 1235px;
  width: 1068px;
  height: 225px;
  padding: 34px 60px;
  border-radius: 38px;
}

.tail {
  position: absolute;
  fill: var(--callout-fill);
  stroke: var(--callout);
  stroke-width: 6px;
}

.tail .joint {
  stroke: none;
}

.tail-up {
  top: -66px;
  right: 174px;
  width: 272px;
  height: 66px;
}

.tail-right {
  top: 120px;
  left: 1056px;
  width: 142px;
  height: 62px;
}
```
